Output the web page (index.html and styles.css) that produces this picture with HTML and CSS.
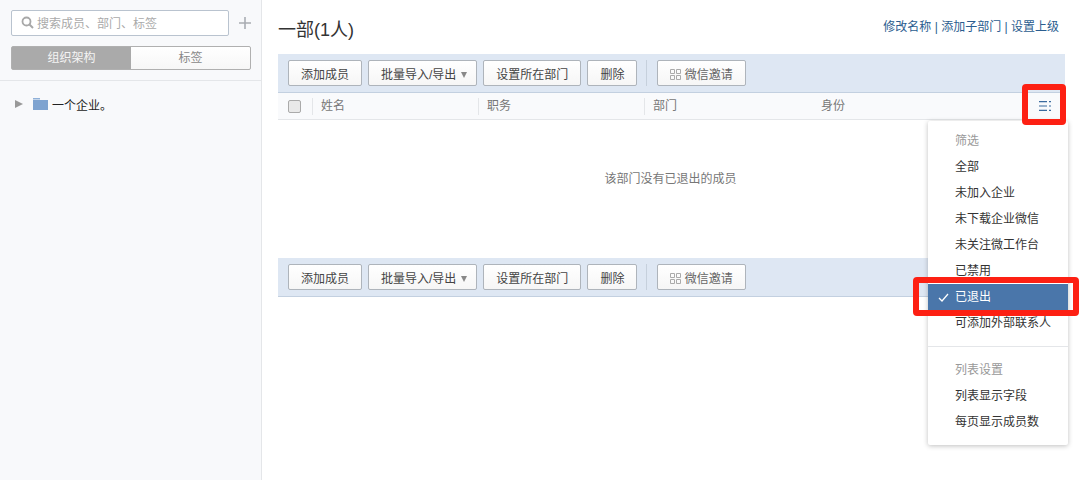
FILE: index.html
```html
<!DOCTYPE html>
<html lang="zh-CN">
<head>
    <meta charset="UTF-8">
    <title>通讯录</title>
    <link rel="stylesheet" href="styles.css">
</head>
<body>
    <div class="page">
        <aside class="sidebar">
            <div class="search-row">
                <div class="search">
                    <svg class="search-icon" width="13" height="13" viewBox="0 0 13 13"><circle cx="5.500" cy="5.500" r="4" fill="none" stroke="#a8a8a8" stroke-width="1.800"/><path d="M8.500 8.500L12 12" stroke="#a8a8a8" stroke-width="2"/></svg>
                    <span>搜索成员、部门、标签</span>
                </div>
                <svg class="plus" width="12" height="12" viewBox="0 0 12 12"><path d="M6 0V12M0 6H12" stroke="#a9adb3" stroke-width="1.600"/></svg>
            </div>
            <div class="tabs">
                <div class="tab active">组织架构</div>
                <div class="tab">标签</div>
            </div>
            <div class="tree">
                <div class="tree-row">
                    <span class="arrow"></span>
                    <svg class="folder" width="15" height="12" viewBox="0 0 15 12"><path d="M0 0H7V1.500H0Z" fill="#8fb0d8"/><path d="M0 2H15V12H0Z" fill="#7ea3d0"/></svg>
                    <span>一个企业。</span>
                </div>
            </div>
        </aside>
        <main class="main">
            <div class="title-row">
                <h1>一部(1人)</h1>
                <div class="links"><a>修改名称</a> | <a>添加子部门</a> | <a>设置上级</a></div>
            </div>
            <div class="toolbar">
                <button class="btn">添加成员</button>
                <button class="btn btn-batch">批量导入/导出<i class="caret"></i></button>
                <button class="btn">设置所在部门</button>
                <button class="btn">删除</button>
                <span class="sep"></span>
                <button class="btn wx">
                    <svg width="11" height="11" viewBox="0 0 11 11"><path d="M.5 .5H4.500V4.500H.5ZM6.500 .5H10.500V4.500H6.500ZM.5 6.500H4.500V10.500H.5ZM6.500 6.500H10.500V10.500H6.500Z" fill="none" stroke="#aaa"/></svg>
                    微信邀请
                </button>
            </div>
            <div class="thead">
                <span class="check-cell"><span class="check"></span></span>
                <span class="col">姓名</span>
                <span class="col">职务</span>
                <span class="col">部门</span>
                <span class="col last">身份</span>
                <svg class="list-icon" width="12" height="10" viewBox="0 0 12 10"><path d="M0 .6H8M0 5H8M0 9.400H8M10 .6H12M10 5H12M10 9.400H12" stroke="#3a6a9e" stroke-width="1.200"/></svg>
            </div>
            <div class="empty">该部门没有已退出的成员</div>
            <div class="toolbar">
                <button class="btn">添加成员</button>
                <button class="btn btn-batch">批量导入/导出<i class="caret"></i></button>
                <button class="btn">设置所在部门</button>
                <button class="btn">删除</button>
                <span class="sep"></span>
                <button class="btn wx">
                    <svg width="11" height="11" viewBox="0 0 11 11"><path d="M.5 .5H4.500V4.500H.5ZM6.500 .5H10.500V4.500H6.500ZM.5 6.500H4.500V10.500H.5ZM6.500 6.500H10.500V10.500H6.500Z" fill="none" stroke="#aaa"/></svg>
                    微信邀请
                </button>
            </div>
        </main>
    </div>

    <div class="menu">
        <div class="menu-title">筛选</div>
        <div class="menu-item">全部</div>
        <div class="menu-item">未加入企业</div>
        <div class="menu-item">未下载企业微信</div>
        <div class="menu-item">未关注微工作台</div>
        <div class="menu-item">已禁用</div>
        <div class="menu-item selected">
            <svg class="tick" width="11" height="9" viewBox="0 0 11 9"><path d="M1 5L4 8L10 1" fill="none" stroke="#fff" stroke-width="1.300"/></svg>
            已退出
        </div>
        <div class="menu-item">可添加外部联系人</div>
        <div class="menu-line"></div>
        <div class="menu-title">列表设置</div>
        <div class="menu-item">列表显示字段</div>
        <div class="menu-item">每页显示成员数</div>
    </div>

    <div class="mark mark-icon"></div>
    <div class="mark mark-item"></div>
</body>
</html>
```

FILE: styles.css
```css
* {
    box-sizing: border-box;
}
html, body {
    height: 100%;
}
body {
    margin: 0;
    font-family: "Liberation Sans", "Noto Sans CJK SC", sans-serif;
    font-size: 12px;
    color: #333;
    background: #fff;
    overflow: hidden;
}
.page {
    display: flex;
    height: 480px;
}
.sidebar {
    width: 262px;
    flex: none;
    background: #f8f9fb;
    border-right: 1px solid #e4e6e9;
}
.search-row {
    display: flex;
    align-items: center;
    gap: 10px;
    padding: 10px 0 0 11px;
}
.search {
    width: 218px;
    height: 26px;
    display: flex;
    align-items: center;
    gap: 3px;
    padding: 0 0 2px 9px;
    background: #fff;
    border: 1px solid #b9c3cf;
    border-radius: 2px;
    color: #aaa;
}
.tabs {
    display: flex;
    width: 240px;
    height: 24px;
    margin: 10px 0 0 11px;
    border: 1px solid #b0b0b0;
    border-radius: 2px;
    background: linear-gradient(#fff, #f7f7f7);
}
.tab {
    flex: 1;
    line-height: 23px;
    text-align: center;
    color: #888;
}
.tab.active {
    background: #aaa;
    color: #f4f4f4;
}
.tree {
    margin-top: 10px;
    padding-top: 13px;
    border-top: 1px solid #e4e6e9;
}
.tree-row {
    display: flex;
    align-items: center;
    height: 20px;
    padding-left: 15px;
    color: #222;
}
.arrow {
    width: 0;
    height: 0;
    border-left: 8px solid #999;
    border-top: 4px solid transparent;
    border-bottom: 4px solid transparent;
    margin-right: 10px;
}
.folder {
    margin-right: 4px;
}
.main {
    flex: 1;
    padding: 0 18px 0 16px;
}
.title-row {
    display: flex;
    justify-content: space-between;
    height: 54px;
    padding-top: 19px;
}
h1 {
    margin: 0;
    font-size: 18px;
    font-weight: normal;
    line-height: 22px;
    color: #333;
}
.links {
    line-height: 16px;
    color: #2b5d8f;
    padding-right: 6px;
}
.toolbar {
    display: flex;
    align-items: center;
    gap: 6px;
    height: 39px;
    padding-left: 10px;
    background: #dee7f3;
    border-bottom: 1px solid #c3d0e0;
}
.btn {
    height: 26px;
    padding: 0 12px;
    font: inherit;
    color: #444;
    background: linear-gradient(#fff, #f6f6f6);
    border: 1px solid #aeb4bb;
    border-radius: 2px;
}
.btn-batch {
    padding-right: 9px;
}
.caret {
    display: inline-block;
    margin-left: 5px;
    vertical-align: 1px;
    border-top: 6px solid #888;
    border-left: 3px solid transparent;
    border-right: 3px solid transparent;
}
.sep {
    width: 1px;
    height: 26px;
    margin: 0 4px 0 3px;
    background: #c6d0dc;
}
.wx {
    color: #666;
}
.wx svg {
    vertical-align: -1px;
}
.thead {
    display: flex;
    align-items: center;
    height: 27px;
    background: #f9fafc;
    border-bottom: 1px solid #e4e6e9;
    color: #777;
}
.check-cell {
    width: 34px;
    padding-left: 10px;
}
.check {
    display: block;
    width: 13px;
    height: 13px;
    background: #e9e9e9;
    border: 1px solid #aaa;
    border-radius: 2px;
}
.col {
    width: 166px;
    height: 17px;
    line-height: 17px;
    padding-left: 8px;
    border-left: 1px solid #e4e6e9;
}
.col.last {
    border-left: 0;
    padding-left: 11px;
}
.list-icon {
    margin-left: auto;
    margin-right: 14px;
}
.empty {
    height: 138px;
    padding: 49px 2px 0 0;
    text-align: center;
    color: #777;
}
.menu {
    position: absolute;
    left: 928px;
    top: 121px;
    width: 140px;
    height: 324px;
    padding-top: 7px;
    background: #fff;
    border-radius: 2px;
    box-shadow: 0 1px 5px rgba(0, 0, 0, 0.25);
    color: #333;
}
.menu-title, .menu-item {
    height: 26px;
    line-height: 27px;
    padding-left: 27px;
    position: relative;
}
.menu-title {
    color: #999;
}
.menu-item.selected {
    background: #4a76aa;
    color: #fff;
}
.tick {
    position: absolute;
    left: 10px;
    top: 9px;
}
.menu-line {
    height: 1px;
    margin: 10px 0 10px;
    background: #e4e6e9;
}
.mark {
    position: absolute;
    border: 6px solid #fd2013;
    border-radius: 4px;
}
.mark-icon {
    left: 1022px;
    top: 84px;
    width: 44px;
    height: 41px;
}
.mark-item {
    left: 913px;
    top: 277px;
    width: 166px;
    height: 39px;
}
```
